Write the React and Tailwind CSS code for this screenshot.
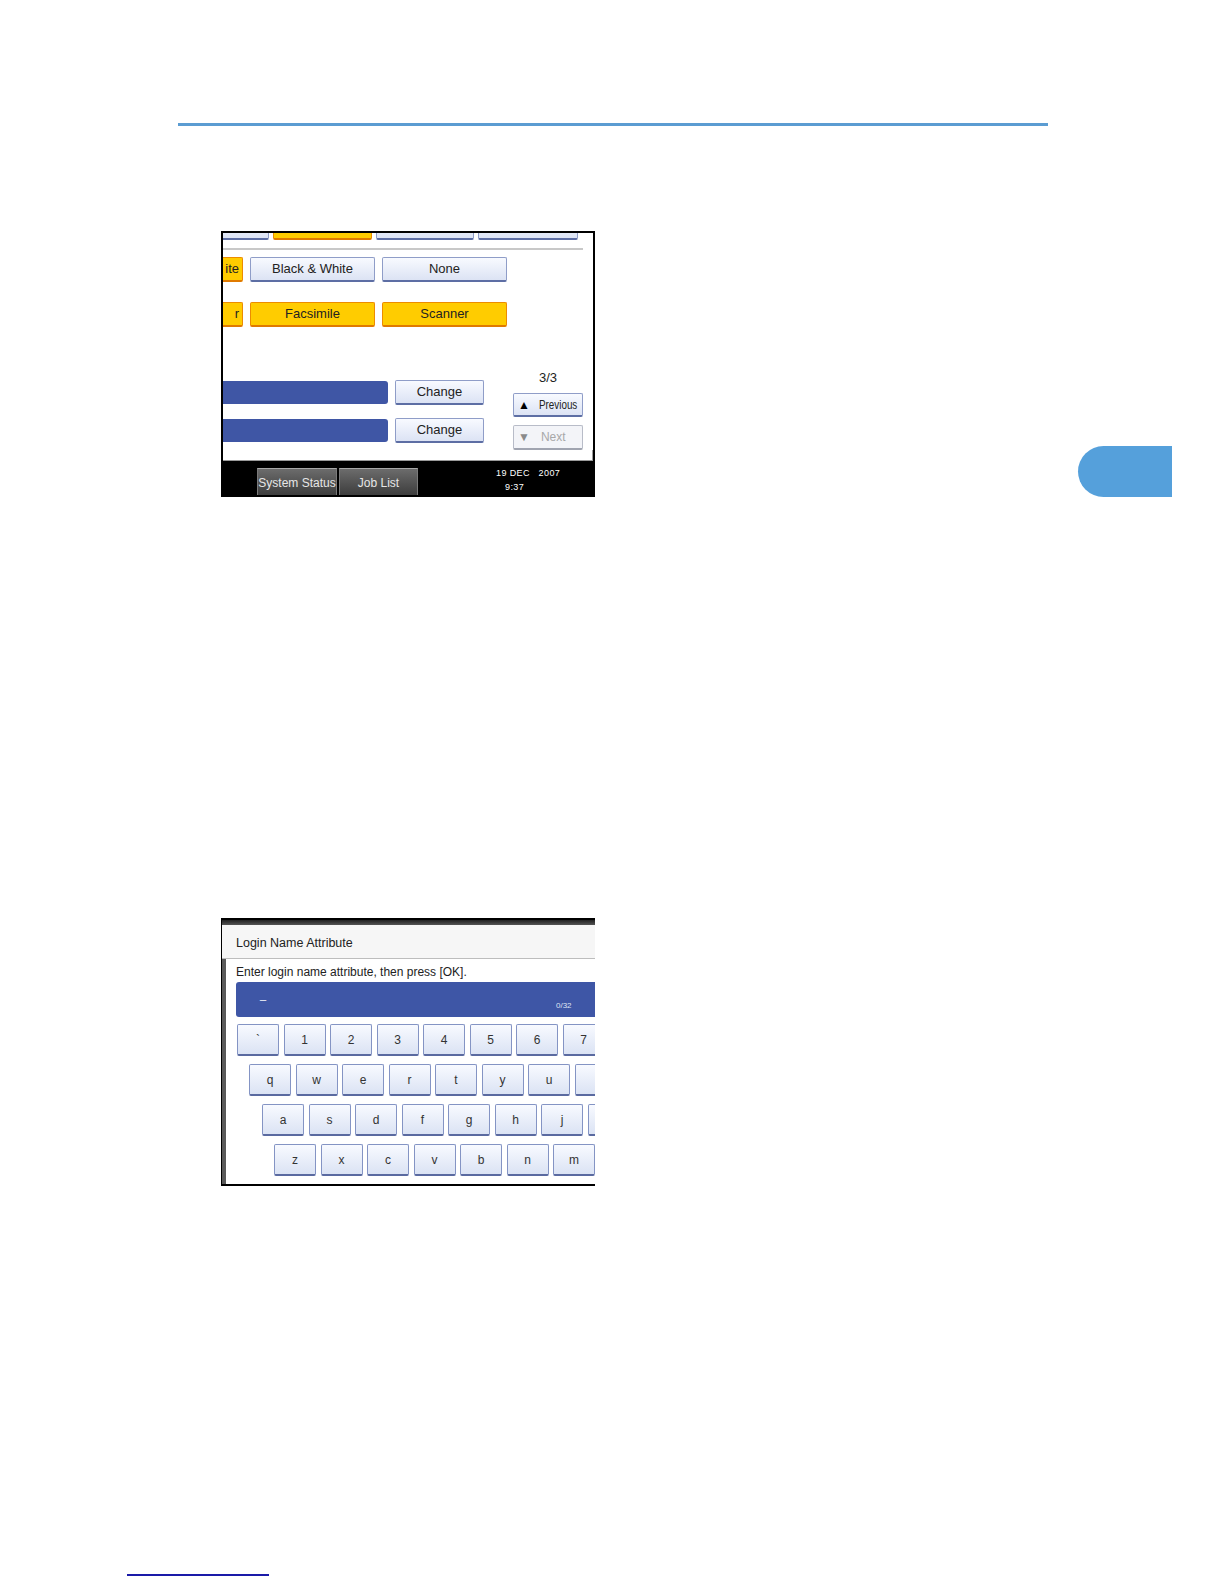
// App.jsx — manual page with two operation-panel screenshots
import React from "react";

const lightBtn =
  "flex shrink-0 items-center justify-center rounded-[2px] border border-[#8f9dc8] border-b-2 border-b-[#5d6ea4] bg-linear-to-b from-[#f8faff] to-[#dce3f4] text-[13px] text-[#222]";
const yellowBtn =
  "flex shrink-0 items-center justify-center rounded-[2px] border border-[#ec8c00] border-b-2 border-b-[#e07a00] bg-[#ffcc00] text-[13px] text-[#222]";
const keyBtn =
  "flex h-[32px] w-[42px] shrink-0 items-center justify-center rounded-[2px] border border-[#8494c4] border-b-2 border-b-[#5a6aa0] bg-linear-to-b from-[#f8faff] to-[#dbe3f4] text-[12px] text-[#333]";
const darkBtn =
  "flex h-[30px] shrink-0 items-center justify-center border border-[#7a7a7a] border-t-[#a8a8a8] bg-linear-to-b from-[#6c6c6c] to-[#3a3a3a] text-[12px] text-[#e6e6e6]";

// last key of each row is cut by the screen edge, so no label shows
const KEY_ROWS = [
  { offset: "ml-[1px]", keys: ["`", "1", "2", "3", "4", "5", "6", "7", ""] },
  { offset: "ml-[13px]", keys: ["q", "w", "e", "r", "t", "y", "u", ""] },
  { offset: "ml-[26px]", keys: ["a", "s", "d", "f", "g", "h", "j", ""] },
  { offset: "ml-[38px]", keys: ["z", "x", "c", "v", "b", "n", "m", ""] },
];

function AccessScreen() {
  return (
    <div className="flex h-[266px] w-[374px] shrink-0 flex-col overflow-hidden border-2 border-black bg-white">
      {/* top row, mostly scrolled off */}
      <div className="-mt-[18px] flex h-[25px] gap-[4px]">
        <div className={`${lightBtn} w-[46px] rounded-l-none border-l-0`} />
        <div className={`${yellowBtn} w-[99px]`} />
        <div className={`${lightBtn} w-[98px]`} />
        <div className={`${lightBtn} w-[100px]`} />
      </div>
      <div className="mt-[8px] h-[2px] w-[360px] shrink-0 bg-[#c8c8c8]" />

      <div className="mt-[7px] flex h-[25px] gap-[7px]">
        <div className={`${yellowBtn} w-[20px] justify-end rounded-l-none border-l-0 pr-[3px]`}>ite</div>
        <div className={`${lightBtn} w-[125px]`}>Black &amp; White</div>
        <div className={`${lightBtn} w-[125px]`}>None</div>
      </div>

      <div className="mt-[20px] flex h-[25px] gap-[7px]">
        <div className={`${yellowBtn} w-[20px] justify-end rounded-l-none border-l-0 pr-[3px]`}>r</div>
        <div className={`${yellowBtn} w-[125px]`}>Facsimile</div>
        <div className={`${yellowBtn} w-[125px]`}>Scanner</div>
      </div>

      <div className="mt-[43px] flex items-start">
        <div className="flex w-[261px] flex-col gap-[13px] pt-[10px]">
          {[0, 1].map((i) => (
            <div key={i} className="flex items-center gap-[7px]">
              <div className="h-[23px] w-[165px] rounded-r-[3px] bg-[#3f56a5]" />
              <div className={`${lightBtn} h-[25px] w-[89px]`}>Change</div>
            </div>
          ))}
        </div>
        <div className="ml-[29px] flex w-[70px] flex-col">
          <div className="flex h-[16px] items-center justify-center text-[13px] text-[#222]">3/3</div>
          <div className={`${lightBtn} mt-[7px] h-[24px] justify-start gap-[9px] pl-[4px]`}>
            <span className="text-[12px] leading-none text-black">▲</span>
            <span className="inline-block origin-left scale-x-[0.82] text-[12px]">Previous</span>
          </div>
          <div className="mt-[8px] flex h-[25px] items-center gap-[11px] rounded-[2px] border border-[#b8bcc8] border-b-2 border-b-[#a0a4b0] bg-[#f3f4f8] pl-[4px] text-[12px] text-[#a8a8a8]">
            <span className="text-[12px] leading-none text-[#8a8a8a]">▼</span>
            <span>Next</span>
          </div>
        </div>
      </div>

      <div className="flex-1 border-b border-r border-[#9a9a9a]" />

      {/* status bar */}
      <div className="flex h-[34px] shrink-0 items-start bg-black pl-[34px]">
        <div className={`${darkBtn} mt-[7px] w-[80px]`}>System Status</div>
        <div className={`${darkBtn} ml-[2px] mt-[7px] w-[79px]`}>Job List</div>
        <div className="ml-[78px] mt-[5px] whitespace-pre text-[9px] leading-[14px] tracking-[0.4px] text-white">
          <div>19 DEC   2007</div>
          <div className="pl-[9px]">9:37</div>
        </div>
      </div>
    </div>
  );
}

function KeyboardScreen() {
  return (
    <div className="flex h-[268px] w-[374px] flex-col overflow-hidden border-y-2 border-l border-black bg-white">
      <div className="h-[5px] shrink-0 bg-linear-to-b from-[#222] to-[#555]" />
      <div className="flex h-[34px] shrink-0 items-center border-b border-[#bdbdbd] bg-[#f6f6f6] pl-[14px] pt-[3px] text-[12.5px] text-[#222]">
        Login Name Attribute
      </div>
      <div className="flex flex-1">
        <div className="w-[4px] shrink-0 bg-[#5a5a5a]" />
        <div className="flex min-w-0 flex-col pl-[10px]">
          <div className="mt-[6px] whitespace-nowrap text-[12px] leading-[14px] text-[#222]">
            Enter login name attribute, then press [OK].
          </div>
          <div className="mt-[3px] flex h-[35px] w-[400px] shrink-0 rounded-l-[3px] bg-[#3e56a6] text-white">
            <span className="w-[320px] shrink-0 pl-[24px] pt-[8px] text-[11px] leading-none">_</span>
            <span className="pt-[20px] text-[8px] leading-none text-[#dfe4f4]">0/32</span>
          </div>
          <div className="mt-[7px] flex flex-col gap-[8px]">
            {KEY_ROWS.map((row) => (
              <div key={row.keys[0]} className={`${row.offset} flex w-max gap-[4.5px]`}>
                {row.keys.map((k, i) => (
                  <div key={i} className={keyBtn}>
                    {k}
                  </div>
                ))}
              </div>
            ))}
          </div>
        </div>
      </div>
    </div>
  );
}

export default function App() {
  return (
    <div className="min-h-[1584px] w-[1224px] bg-white font-['Liberation_Sans',Arial,sans-serif]">
      <div className="pl-[178px] pt-[123px]">
        <div className="h-[3px] w-[870px] bg-[#5b9cd2]" />
      </div>

      <div className="mt-[105px] flex pl-[221px]">
        <AccessScreen />
        {/* chapter thumb tab */}
        <div className="ml-[483px] mt-[215px] h-[51px] w-[94px] rounded-l-full bg-[#55a0db]" />
      </div>

      <div className="mt-[421px] pl-[221px]">
        <KeyboardScreen />
      </div>

      <div className="pl-[127px] pt-[388px]">
        <div className="h-[2px] w-[142px] bg-[#1a1aa8]" />
      </div>
    </div>
  );
}
